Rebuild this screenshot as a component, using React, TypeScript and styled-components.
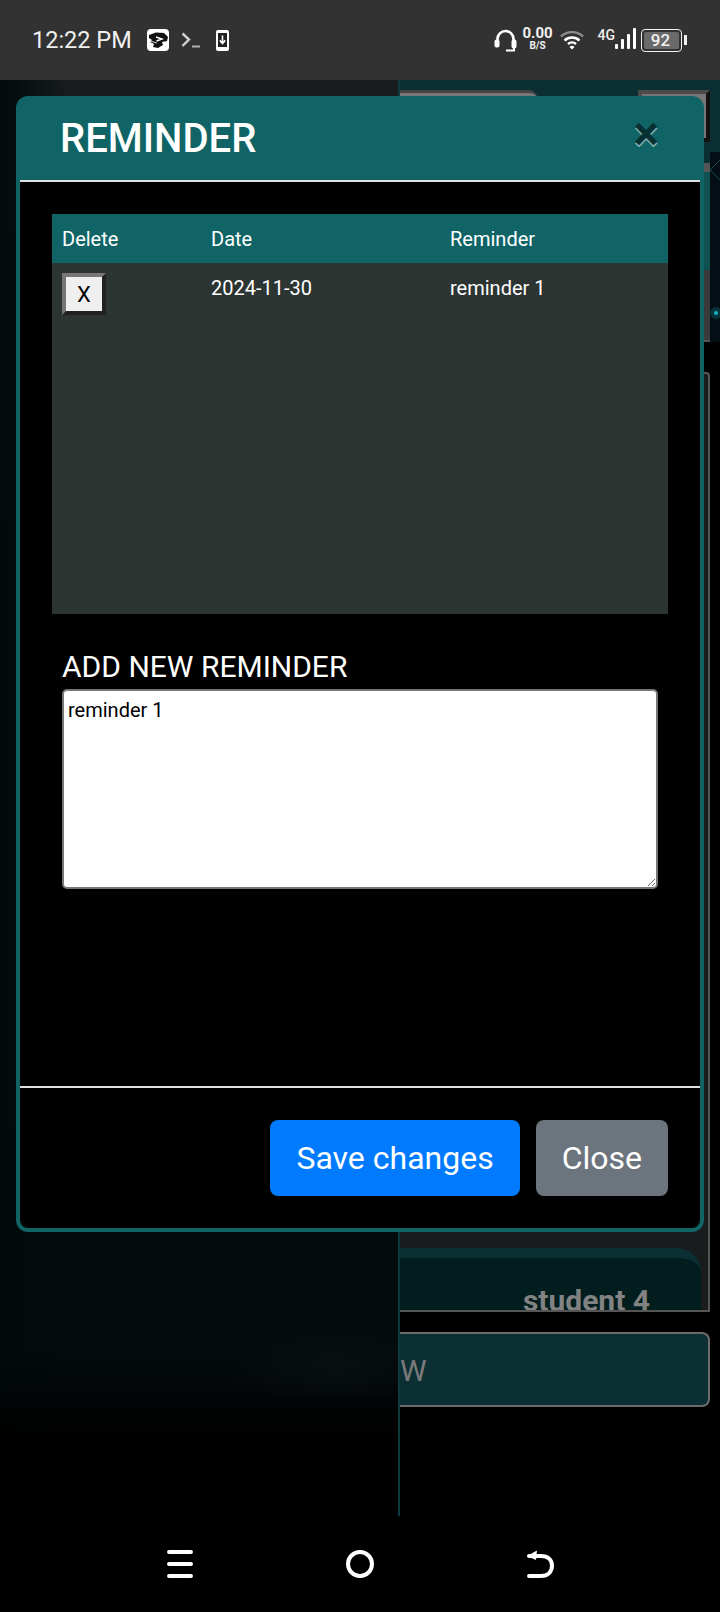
import React from "react"
import styled, { createGlobalStyle } from "styled-components"

const GlobalStyle = createGlobalStyle`
  html, body {
    margin: 0;
    background: #000;
    font-family: Roboto, "Liberation Sans", sans-serif;
  }
  * { box-sizing: border-box; }
`

const Screen = styled.div`
  width: 720px;
  height: 1612px;
  display: flex;
  flex-direction: column;
  overflow: hidden;
  background: #000;
`

/* status bar */
const StatusBar = styled.div`
  height: 80px;
  flex: none;
  display: flex;
  align-items: center;
  justify-content: space-between;
  padding: 0 38px 0 32px;
  background: #323232;
  color: #f0f0f0;
`
const StatusGroup = styled.div`
  display: flex;
  align-items: center;
`
const Clock = styled.span`
  font-size: 23.5px;
  width: 115px;
  white-space: nowrap;
`
const Speed = styled.div`
  display: flex;
  flex-direction: column;
  align-items: center;
  width: 28px;
  margin: -4px 8px 0 7px;
  font-weight: 700;
`
const SpeedValue = styled.span`
  font-size: 15px;
  line-height: 14px;
`
const SpeedUnit = styled.span`
  font-size: 10px;
  line-height: 11px;
`
const NetworkType = styled.span`
  font-size: 14px;
  font-weight: 500;
  line-height: 14px;
  margin: -10px 0 0 14px;
`
const Battery = styled.div`
  position: relative;
  width: 41px;
  height: 23px;
  margin-left: 5px;
  padding: 2px;
  border: 1.5px solid #f0f0f0;
  border-radius: 4px;
`
const BatteryLevel = styled.div`
  height: 100%;
  display: flex;
  align-items: center;
  justify-content: center;
  padding-right: 2px;
  border-radius: 2px;
  background: #6a6a6a;
  font-size: 17px;
  font-weight: 500;
`
const BatteryTip = styled.div`
  position: absolute;
  top: 5px;
  right: -6px;
  width: 3px;
  height: 10px;
  background: #f0f0f0;
`

/* page behind the dialog */
const Stage = styled.div`
  position: relative;
  flex: 1;
  display: flex;
  min-height: 0;
`
const SidePanel = styled.div`
  width: 398px;
  flex: none;
  background:
    radial-gradient(ellipse 110px 40px at 335px 1285px, #090f11, transparent),
    linear-gradient(to bottom, transparent 1270px, #000 1360px),
    linear-gradient(90deg, #020a0c, transparent 70px),
    linear-gradient(to bottom, #181c1c 0, #0c1010 300px, #040b0c 1100px);
`
const MainPanel = styled.div`
  flex: 1;
  min-width: 0;
  display: flex;
  flex-direction: column;
  border-left: 2px solid #0c3a3d;
`
const TopBand = styled.div`
  height: 72px;
  flex: none;
  display: flex;
  justify-content: space-between;
  align-items: flex-start;
  padding: 10px 10px 0 0;
  background: #0c2f33;
`
const SearchBox = styled.div`
  width: 137px;
  height: 40px;
  background: #777;
  border-top: 3px solid #444;
  border-top-right-radius: 8px;
`
const OutsetButton = styled.div`
  width: 72px;
  height: 52px;
  background: #777;
  border: 4px solid;
  border-color: #4a4a4a #111 #111 #4a4a4a;
`
const Hero = styled.div`
  height: 190px;
  flex: none;
  display: flex;
  justify-content: flex-end;
  background: #030f14;
`
const HeroScroll = styled.div`
  width: 6px;
  background: linear-gradient(
    to bottom,
    #0c2f33 0 11px,
    #555 11px 20px,
    #0f5153 20px 118px,
    #3a3a3a 118px 188px,
    #555 188px 190px
  );
`
const HeroSky = styled.svg`
  width: 10px;
  height: 190px;
  flex: none;
`
const ListPanel = styled.div`
  height: 940px;
  flex: none;
  margin: 30px 10px 0 0;
  display: flex;
  flex-direction: column;
  justify-content: flex-end;
  background: #181c1c;
  border: 2px solid #555;
  border-width: 2px 2px 2px 0;
  border-top-right-radius: 4px;
`
const StudentCard = styled.div`
  height: 62px;
  flex: none;
  margin-right: 7px;
  padding: 25px 51px 0 0;
  overflow: hidden;
  text-align: right;
  background: #021d1d;
  border-top: 10px solid #0c2f33;
  border-top-right-radius: 24px;
  color: #828282;
  font-size: 30px;
  font-weight: 700;
  line-height: 36px;
`
const NewButton = styled.div`
  height: 75px;
  flex: none;
  margin: 20px 10px 0 0;
  padding-top: 2px;
  display: flex;
  align-items: center;
  background: #0c2f33;
  border: 2px solid #6b6b6b;
  border-left: 0;
  border-radius: 0 8px 8px 0;
  color: #7a7a7a;
  font-size: 30px;
`

/* dialog */
const Dialog = styled.div`
  position: absolute;
  top: 16px;
  left: 16px;
  width: 688px;
  height: 1136px;
  display: flex;
  flex-direction: column;
  background: #000;
  border: 4px solid #106466;
  border-radius: 12px;
`
const DialogHeader = styled.div`
  height: 82px;
  flex: none;
  display: flex;
  align-items: center;
  justify-content: space-between;
  padding: 0 41px 2px 40px;
  background: #106466;
  border-bottom: 2px solid #dee2e6;
`
const DialogTitle = styled.h5`
  margin: 0;
  color: #fff;
  font-size: 40px;
  font-weight: 500;
  line-height: 1.5;
`
const CloseX = styled.button`
  margin-bottom: 10px;
  padding: 0;
  border: 0;
  background: transparent;
  color: #000;
  opacity: 0.5;
  font-family: inherit;
  font-size: 48px;
  font-weight: 700;
  line-height: 1;
  text-shadow: 0 2px 0 #fff;
`
const DialogBody = styled.div`
  flex: 1;
  min-height: 0;
  padding: 32px;
`
const ReminderTable = styled.table`
  width: 616px;
  height: 400px;
  border-collapse: collapse;
  table-layout: fixed;
  background: #2d3533;
  color: #fff;
  font-size: 20px;
`
const HeadCell = styled.th<{ $width?: number }>`
  width: ${({ $width }) => ($width ? `${$width}px` : "auto")};
  height: 49px;
  padding: 0 10px;
  background: #106466;
  font-weight: 400;
  text-align: left;
`
const Cell = styled.td`
  padding: 10px 10px 0;
  vertical-align: top;
  line-height: 30px;
`
const DeleteButton = styled.button`
  width: 44px;
  height: 42px;
  padding: 0;
  display: block;
  background: #efefef;
  border: 4px solid;
  border-color: #767676 #212121 #212121 #767676;
  color: #000;
  font-family: inherit;
  font-size: 22px;
`
const NewLabel = styled.label`
  display: block;
  margin: 32px 0 1px 10px;
  color: #fff;
  font-size: 30px;
  line-height: 42px;
`
const ReminderInput = styled.textarea`
  display: block;
  width: 596px;
  height: 200px;
  margin-left: 10px;
  padding: 7px 4px;
  background: #fff;
  border: 2px solid #767676;
  border-radius: 5px;
  color: #000;
  font-family: inherit;
  font-size: 20px;
  line-height: 24px;
`
const DialogFooter = styled.div`
  flex: none;
  display: flex;
  justify-content: flex-end;
  gap: 16px;
  padding: 32px;
  border-top: 2px solid #dee2e6;
`
const FooterButton = styled.button<{ $primary?: boolean }>`
  height: 76px;
  padding: 0 26px;
  background: ${({ $primary }) => ($primary ? "#007bff" : "#6c757d")};
  border: 0;
  border-radius: 8px;
  color: #fff;
  font-family: inherit;
  font-size: 32px;
`

/* navigation bar */
const NavBar = styled.div`
  height: 96px;
  flex: none;
  display: grid;
  grid-template-columns: repeat(3, 180px);
  justify-content: center;
  justify-items: center;
  align-items: center;
  background: #000;
`

const AppBadge = () => (
  <svg width="22" height="22" viewBox="0 0 22 22" style={{ marginRight: 12 }}>
    <rect width="22" height="22" rx="4" fill="#fff" />
    <path
      d="M2 6 L9 3.5 L17 4 L21 8 L20 12 L15 13 L16 16 L11 19 L6 18 L7 15 L3 13 L5 11 L2 9 Z"
      fill="#111"
    />
    <path d="M9 8 L15 10 L9.5 12" fill="none" stroke="#fff" strokeWidth="1.4" />
    <path d="M3 12 L10 14" stroke="#fff" strokeWidth="0.8" />
  </svg>
)

const TerminalIcon = () => (
  <svg width="19" height="16" viewBox="0 0 19 16" style={{ marginRight: 16 }}>
    <path d="M1.5 1.5 L8 7.5 L1.5 14" fill="none" stroke="#d0d0d0" strokeWidth="2.4" />
    <path d="M11 14.5 H19" stroke="#b0b0b0" strokeWidth="2" />
  </svg>
)

const PhoneDownIcon = () => (
  <svg width="13" height="21" viewBox="0 0 13 21">
    <rect width="13" height="21" rx="2" fill="#fff" />
    <rect x="2" y="3" width="9" height="14" fill="#222" />
    <path d="M6.5 5.5 V13 M3.8 10.4 L6.5 13.5 L9.2 10.4" fill="none" stroke="#fff" strokeWidth="1.6" />
  </svg>
)

const HeadsetIcon = () => (
  <svg width="23" height="25" viewBox="0 0 23 25">
    <path
      d="M3.5 15 V11 a8 8 0 0 1 16 0 V15"
      fill="none"
      stroke="#fff"
      strokeWidth="2.6"
    />
    <rect x="0.5" y="11.5" width="5" height="8" rx="2" fill="#fff" />
    <rect x="17.5" y="11.5" width="5" height="9" rx="2" fill="#fff" />
    <path d="M20 20 V22.5 H12" fill="none" stroke="#fff" strokeWidth="2" />
  </svg>
)

const WifiIcon = () => (
  <svg width="24" height="19" viewBox="0 0 24 19">
    <path d="M1 5.5 a16 16 0 0 1 22 0" fill="none" stroke="#8c8c8c" strokeWidth="2.4" />
    <path d="M4.5 9.5 a11 11 0 0 1 15 0" fill="none" stroke="#fff" strokeWidth="2.4" />
    <path d="M8 13 a6 6 0 0 1 8 0" fill="none" stroke="#fff" strokeWidth="2.4" />
    <path d="M9.5 16 L12 18.6 L14.5 16 a3.6 3.6 0 0 0 -5 0 Z" fill="#fff" />
  </svg>
)

const SignalIcon = () => (
  <svg width="21" height="22" viewBox="0 0 21 22" style={{ marginTop: -2 }}>
    <rect x="0" y="16" width="3" height="5" rx="1" fill="#fff" />
    <rect x="6" y="11" width="3" height="10" rx="1" fill="#fff" />
    <rect x="12" y="6" width="3" height="15" rx="1" fill="#fff" />
    <rect x="18" y="0" width="3" height="21" rx="1" fill="#fff" />
  </svg>
)

const MenuIcon = () => (
  <svg width="26" height="28" viewBox="0 0 26 28">
    <path
      d="M2 2 H24 M2 14 H24 M2 26 H24"
      stroke="#fff"
      strokeWidth="4"
      strokeLinecap="round"
    />
  </svg>
)

const HomeIcon = () => (
  <svg width="28" height="28" viewBox="0 0 28 28">
    <circle cx="14" cy="14" r="12" fill="none" stroke="#fff" strokeWidth="4" />
  </svg>
)

const BackIcon = () => (
  <svg width="28" height="30" viewBox="0 0 28 30">
    <path
      d="M3 7 H15 C22 7 26 11 26 16.5 C26 22.5 22 27 15 27 H3"
      fill="none"
      stroke="#fff"
      strokeWidth="4"
      strokeLinecap="round"
    />
    <path d="M1 7 L11 1.5 L10 11 Z" fill="#fff" />
  </svg>
)

export default function App() {
  return (
    <Screen>
      <GlobalStyle />
      <StatusBar>
        <StatusGroup>
          <Clock>12:22 PM</Clock>
          <AppBadge />
          <TerminalIcon />
          <PhoneDownIcon />
        </StatusGroup>
        <StatusGroup>
          <HeadsetIcon />
          <Speed>
            <SpeedValue>0.00</SpeedValue>
            <SpeedUnit>B/S</SpeedUnit>
          </Speed>
          <WifiIcon />
          <NetworkType>4G</NetworkType>
          <SignalIcon />
          <Battery>
            <BatteryLevel>92</BatteryLevel>
            <BatteryTip />
          </Battery>
        </StatusGroup>
      </StatusBar>

      <Stage>
        <SidePanel />
        <MainPanel>
          <TopBand>
            <SearchBox />
            <OutsetButton />
          </TopBand>
          <Hero>
            <HeroScroll />
            <HeroSky viewBox="0 0 10 190">
              <path d="M10 8 L0 18 L10 28" fill="none" stroke="#1a4a52" strokeWidth="1" />
              <circle cx="6" cy="161" r="6" fill="#0c5560" opacity="0.5" />
              <circle cx="6" cy="161" r="2" fill="#14b5c4" />
            </HeroSky>
          </Hero>
          <ListPanel>
            <StudentCard>student 4</StudentCard>
          </ListPanel>
          <NewButton>W</NewButton>
        </MainPanel>

        <Dialog>
          <DialogHeader>
            <DialogTitle>REMINDER</DialogTitle>
            <CloseX>×</CloseX>
          </DialogHeader>
          <DialogBody>
            <ReminderTable>
              <thead>
                <tr>
                  <HeadCell $width={149}>Delete</HeadCell>
                  <HeadCell $width={239}>Date</HeadCell>
                  <HeadCell>Reminder</HeadCell>
                </tr>
              </thead>
              <tbody>
                <tr>
                  <Cell>
                    <DeleteButton>X</DeleteButton>
                  </Cell>
                  <Cell>2024-11-30</Cell>
                  <Cell>reminder 1</Cell>
                </tr>
              </tbody>
            </ReminderTable>
            <NewLabel>ADD NEW REMINDER</NewLabel>
            <ReminderInput defaultValue="reminder 1" />
          </DialogBody>
          <DialogFooter>
            <FooterButton $primary>Save changes</FooterButton>
            <FooterButton>Close</FooterButton>
          </DialogFooter>
        </Dialog>
      </Stage>

      <NavBar>
        <MenuIcon />
        <HomeIcon />
        <BackIcon />
      </NavBar>
    </Screen>
  )
}
